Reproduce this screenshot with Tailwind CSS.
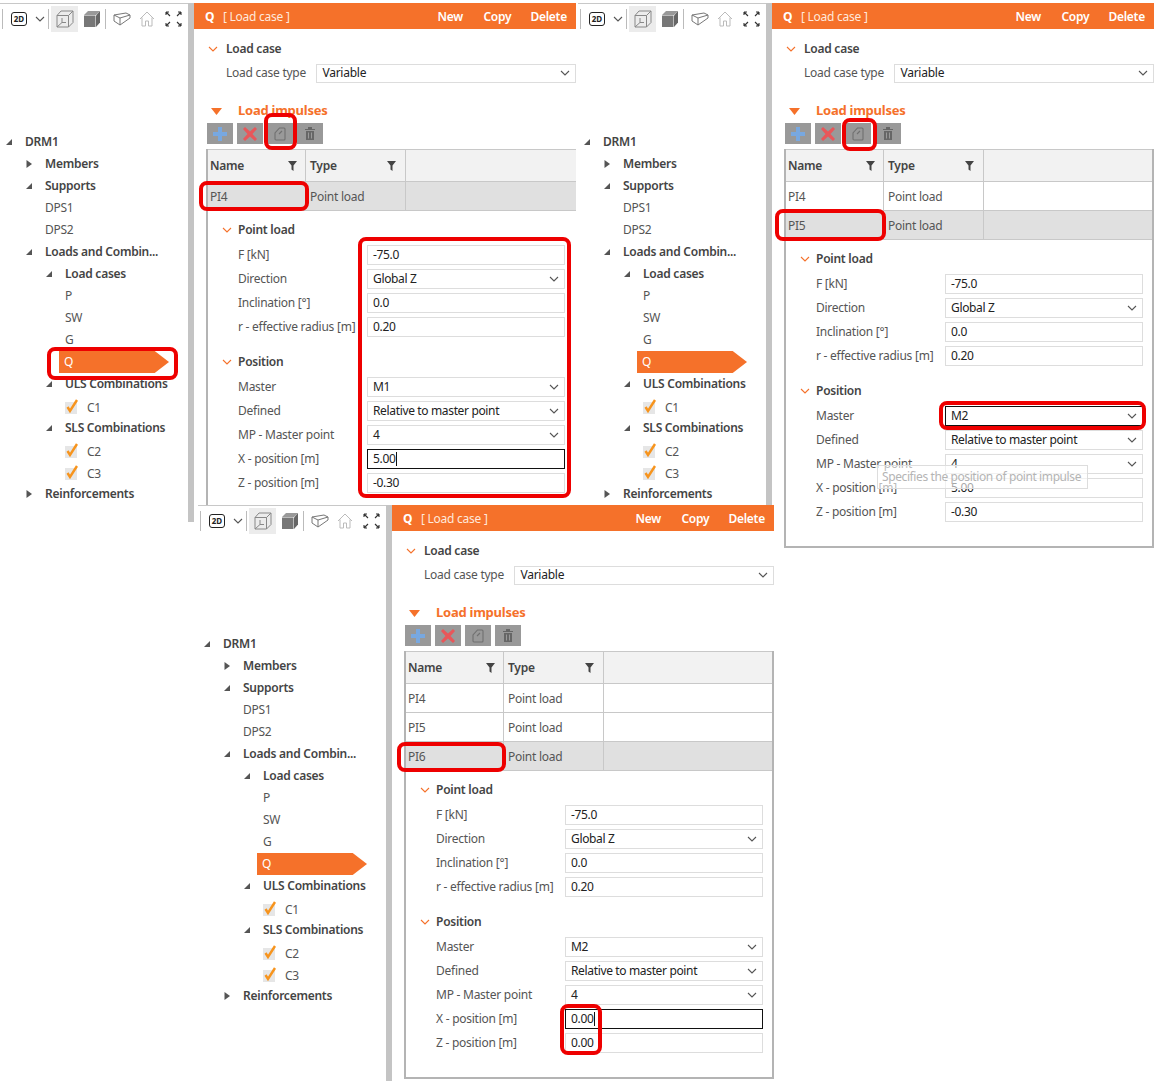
<!DOCTYPE html>
<html lang="en">
<head>
<meta charset="UTF-8" />
<title>Load impulses</title>
<script src="https://cdn.jsdelivr.net/npm/@tailwindcss/browser@4"></script>
</head>
<body class="bg-white">
<div id="page" class="relative w-[1158px] h-[1081px] overflow-hidden bg-white text-[12px] tracking-[-0.25px] text-[#555] font-['Noto_Sans',sans-serif]"></div>

<script>
  const chev = `<svg width="10" height="6" viewBox="0 0 10 6" class="shrink-0"><path d="M1 1l4 4 4-4" fill="none" stroke="#555" stroke-width="1.1"/></svg>`;
  const orangeChev = `<svg width="10" height="6" viewBox="0 0 10 6" class="shrink-0"><path d="M1 1l4 4 4-4" fill="none" stroke="#f5712a" stroke-width="1.1"/></svg>`;
  const open = `<svg width="8" height="8" viewBox="0 0 8 8" class="shrink-0"><path d="M7 1v6H1z" fill="#555"/></svg>`;
  const closed = `<svg width="8" height="8" viewBox="0 0 8 8" class="shrink-0"><path d="M1.500 0v8l5.500-4z" fill="#555"/></svg>`;
  const funnel = `<svg width="9" height="10" viewBox="0 0 9 10"><path d="M0 0h9L5.500 4.500V10l-2-1.500v-4z" fill="#444"/></svg>`;
  const check = `<span class="relative block w-[12px] h-[12px] bg-[#e6e6e6]"><svg width="15" height="14" viewBox="0 0 15 14" class="absolute left-0 top-[-3px]"><path d="M2.500 8l2.500 4 7-11" fill="none" stroke="#f7941d" stroke-width="2.400"/></svg></span>`;

  function toolbar() {
    return `<div class="h-[30px] flex items-center pl-[2px] border-t border-[#c8c8c8] shrink-0">
      <span class="w-px h-[20px] bg-[#bbb]"></span>
      <span class="ml-[8px] w-[16px] h-[14px] border-[1.500px] border-[#222] rounded-[3px] text-[8px] tracking-normal font-bold text-[#222] flex items-center justify-center leading-none">2D</span>
      <span class="ml-[8px]">${chev}</span>
      <span class="ml-[3px] w-px h-[20px] bg-[#bbb]"></span>
      <span class="ml-[2px] w-[27px] h-[26px] bg-[#ececec] flex items-center justify-center">
        <svg width="18" height="18" viewBox="0 0 18 18" fill="none" stroke="#888" stroke-width="1"><path d="M1 5.500h11.500V17H1zM1 5.500L5 1h12v11.500L12.500 17M12.500 5.500L17 1M1 17l5-4.500M6 12.500V8M6 12.500h4"/></svg>
      </span>
      <span class="ml-[2px] w-[24px] flex justify-center">
        <svg width="18" height="18" viewBox="0 0 18 18"><path d="M1 5.500h11.500V17H1z" fill="#777"/><path d="M1 5L5 1h12l-4 4z" fill="#999"/><path d="M13 5.500L17 1v11.500L13 17z" fill="#666"/></svg>
      </span>
      <span class="ml-px w-px h-[20px] bg-[#bbb]"></span>
      <span class="ml-[7px] w-[20px]">
        <svg width="18" height="14" viewBox="0 0 18 14" fill="none" stroke="#777" stroke-width="1"><path d="M1 3l12-2 4 2-10 3zM1 3v6l6 4V6M7 13l10-7V3"/></svg>
      </span>
      <span class="ml-[6px] w-[20px]">
        <svg width="16" height="16" viewBox="0 0 16 16" fill="none" stroke="#bbb" stroke-width="1"><path d="M1 8l7-7 7 7M3 6.500V15h3.500v-5h3v5H13V6.500"/></svg>
      </span>
      <span class="ml-[6px]">
        <svg width="17" height="16" viewBox="0 0 17 16" fill="none" stroke="#333" stroke-width="1.100"><path d="M1 1l4 4M1 1v3M1 1h3M16 1l-4 4M16 1v3M16 1h-3M1 15l4-4M1 15v-3M1 15h3M16 15l-4-4M16 15v-3M16 15h-3"/></svg>
      </span>
    </div>`;
  }

  function treeRow(h, pad, marker, label, bold) {
    return `<div class="flex items-center" style="height:${h}px;padding-left:${pad}px">
      <span class="w-[20px] flex items-center">${marker}</span>
      <span class="${bold ? "font-semibold text-[#444]" : ""} whitespace-nowrap">${label}</span>
    </div>`;
  }
  function checkRow(label) {
    return `<div class="flex items-center h-[22px] pl-[65px]">
      <span class="w-[22px]">${check}</span><span>${label}</span>
    </div>`;
  }

  function tree() {
    return `<div class="pt-[98px]">
      ${treeRow(22, 5, open, "DRM1", true)}
      ${treeRow(22, 25, closed, "Members", true)}
      ${treeRow(22, 25, open, "Supports", true)}
      ${treeRow(22, 25, "", "DPS1", false)}
      ${treeRow(22, 25, "", "DPS2", false)}
      ${treeRow(22, 25, open, "Loads and Combin...", true)}
      ${treeRow(22, 45, open, "Load cases", true)}
      ${treeRow(22, 45, "", "P", false)}
      ${treeRow(22, 45, "", "SW", false)}
      ${treeRow(22, 45, "", "G", false)}
      <div class="h-[22px] ml-[59px] w-[110px] flex items-center pl-[5px] text-white bg-[#f5712a] [clip-path:polygon(0_0,87%_0,100%_50%,87%_100%,0_100%)]">Q</div>
      ${treeRow(22, 45, open, "ULS Combinations", true)}
      <div class="pt-[2px] mb-[-2px]">${checkRow("C1")}</div>
      ${treeRow(22, 45, open, "SLS Combinations", true)}
      <div class="pt-[2px]">${checkRow("C2")}${checkRow("C3")}</div>
      ${treeRow(18, 25, closed, "Reinforcements", true)}
    </div>`;
  }

  function sectionHead(label, w) {
    return `<div class="h-[20px] flex items-center text-[#444]"><span style="width:${w}px">${orangeChev}</span><span class="font-semibold">${label}</span></div>`;
  }
  function field(label, value, opts = {}) {
    const border = opts.focus ? "border-[#111]" : "border-[#ddd]";
    return `<div class="h-[24px] flex items-center">
      <span class="w-[129px] whitespace-nowrap">${label}</span>
      <div class="w-[198px] h-[20px] border ${border} flex items-center justify-between pl-[5px] pr-[5px] text-[#222] tracking-[-0.35px]">
        <span class="${opts.caret ? "border-r border-[#111] pr-px leading-[14px]" : ""}">${value}</span>
        ${opts.select ? chev : ""}
      </div>
    </div>`;
  }
  function tableRow(name, selected) {
    const bg = selected ? "bg-[#e0e0e0]" : "";
    return `<div class="flex h-[29px] items-center border-b border-[#c8c8c8] ${bg}">
      <span class="w-[98px] h-full flex items-center pl-[2px] pt-px border-r border-[#c8c8c8]">${name}</span>
      <span class="w-[100px] h-full flex items-center pl-[4px] pt-px border-r border-[#c8c8c8]">Point load</span>
    </div>`;
  }

  function form(p) {
    const rows = p.rows.map((n, i) => tableRow(n, i === p.rows.length - 1)).join("");
    return `<div class="relative w-[382px]">
      <div class="h-[26px] bg-[#f5712a] text-white flex items-center pl-[11px] pr-[9px] pt-px">
        <span class="font-bold w-[18px]">Q</span><span class="text-[#ffe9dc]">[ Load case ]</span>
        <span class="ml-auto font-semibold w-[46px]">New</span><span class="font-semibold w-[47px]">Copy</span><span class="font-semibold">Delete</span>
      </div>
      <div class="pl-[14px] pt-[10px]">${sectionHead("Load case", 18)}</div>
      <div class="pl-[32px] h-[24px] mt-[2px] flex items-center">
        <span class="w-[91px]">Load case type</span>
        <div class="w-[261px] h-[19px] border border-[#ddd] flex items-center justify-between pl-[5px] pr-[5px] text-[#222]"><span>Variable</span>${chev}</div>
      </div>
      <div class="pl-[17px] mt-[15px] h-[22px] flex items-center text-[#f5712a] text-[13px] font-bold">
        <svg width="11" height="7" viewBox="0 0 11 7" class="mr-[16px]"><path d="M0 0h11L5.500 7z" fill="#f5712a"/></svg>Load impulses
      </div>
      <div class="flex gap-[4px] pl-[13px] mt-[1px]">
        <span class="w-[26px] h-[21px] bg-[#999] flex items-center justify-center"><svg width="14" height="14" viewBox="0 0 14 14"><path d="M5 0h4v5h5v4H9v5H5V9H0V5h5z" fill="#78a8e0"/></svg></span>
        <span class="w-[26px] h-[21px] bg-[#999] flex items-center justify-center"><svg width="14" height="14" viewBox="0 0 14 14"><path d="M2 0l5 4.500L12 0l2 2-4.500 5L14 12l-2 2-5-4.500L2 14l-2-2 4.500-5L0 2z" fill="#e8575a"/></svg></span>
        <span class="w-[26px] h-[21px] bg-[#999] flex items-center justify-center"><svg width="12" height="14" viewBox="0 0 12 14" fill="none" stroke="#707070" stroke-width="1.100"><path d="M5.500 1H10a1 1 0 0 1 1 1v10a1 1 0 0 1-1 1H2a1 1 0 0 1-1-1V6zM5 7l3-3"/></svg></span>
        <span class="w-[26px] h-[21px] bg-[#999] flex items-center justify-center"><svg width="10" height="13" viewBox="0 0 10 13"><path d="M0 2h10v1H0zM3 0h4v2H3zM1 4h8v9H1z" fill="#666"/><path d="M3.500 5.500v6M6.500 5.500v6" stroke="#999"/></svg></span>
      </div>
      <div class="ml-[12px] mt-[5px] border-l-[2px] border-[#b4b4b4] ${p.ends ? "border-b-[2px] border-r-[2px]" : ""}">
        <div class="flex h-[33px] items-center border-y border-[#c8c8c8] bg-[#f2f2f2] text-[#444] font-semibold">
          <span class="w-[98px] h-full flex items-center justify-between pl-[2px] pr-[8px] border-r border-[#c8c8c8]">Name${funnel}</span>
          <span class="w-[100px] h-full flex items-center justify-between pl-[4px] pr-[9px] border-r border-[#c8c8c8]">Type${funnel}</span>
        </div>
        ${rows}
        <div class="pl-[14px] pt-[9px] pb-[22px]">
          ${sectionHead("Point load", 16)}
          <div class="pl-[16px] pt-[3px]">
            ${field("F [kN]", "-75.0")}
            ${field("Direction", "Global Z", { select: true })}
            ${field("Inclination [°]", "0.0")}
            ${field("r - effective radius [m]", "0.20")}
          </div>
          <div class="mt-[13px]">${sectionHead("Position", 16)}</div>
          <div class="pl-[16px] pt-[3px]">
            ${field("Master", p.master, { select: true, focus: p.focusMaster })}
            ${field("Defined", "Relative to master point", { select: true })}
            ${field("MP - Master point", "4", { select: true })}
            ${field("X - position [m]", p.x, { focus: p.focusX, caret: p.focusX })}
            ${field("Z - position [m]", p.z)}
          </div>
        </div>
      </div>
    </div>`;
  }

  function shot(p) {
    return `<div class="absolute flex overflow-hidden bg-white" style="left:${p.left}px;top:${p.top}px;width:${p.width}px;height:${p.height}px">
      <div class="w-[188px] shrink-0 flex flex-col">${toolbar()}${tree()}</div>
      <div class="w-[6px] shrink-0 bg-[#c4c4c4] self-stretch"></div>
      ${form(p)}
    </div>`;
  }

  function callout(l, t, w, h) {
    return `<div class="absolute border-[4px] border-[#ee0000] rounded-[8px]" style="left:${l}px;top:${t}px;width:${w}px;height:${h}px"></div>`;
  }

  const page = document.getElementById("page");
  page.innerHTML =
    shot({ left: 0, top: 3, width: 578, height: 519, rows: ["PI4"], master: "M1", x: "5.00", z: "-0.30", focusX: true }) +
    shot({ left: 578, top: 3, width: 580, height: 550, rows: ["PI4", "PI5"], master: "M2", x: "5.00", z: "-0.30", focusMaster: true, ends: true }) +
    shot({ left: 198, top: 505, width: 580, height: 576, rows: ["PI4", "PI5", "PI6"], master: "M2", x: "0.00", z: "0.00", focusX: true, ends: true }) +
    `<div class="absolute left-[877px] top-[465px] w-[211px] h-[24px] flex items-center pl-[4px] border border-[#ddd] bg-white/60 text-[#b4b4b4] tracking-[-0.4px] whitespace-nowrap">Specifies the position of point impulse</div>` +
    callout(264, 113, 33, 37) + callout(199, 181, 110, 30) + callout(358, 237, 213, 261) + callout(47, 347, 131, 33) +
    callout(842, 118, 35, 33) + callout(775, 209, 111, 32) + callout(939, 401, 207, 29) +
    callout(397, 742, 109, 30) + callout(560, 1004, 42, 51);
</script>
</body>
</html>
